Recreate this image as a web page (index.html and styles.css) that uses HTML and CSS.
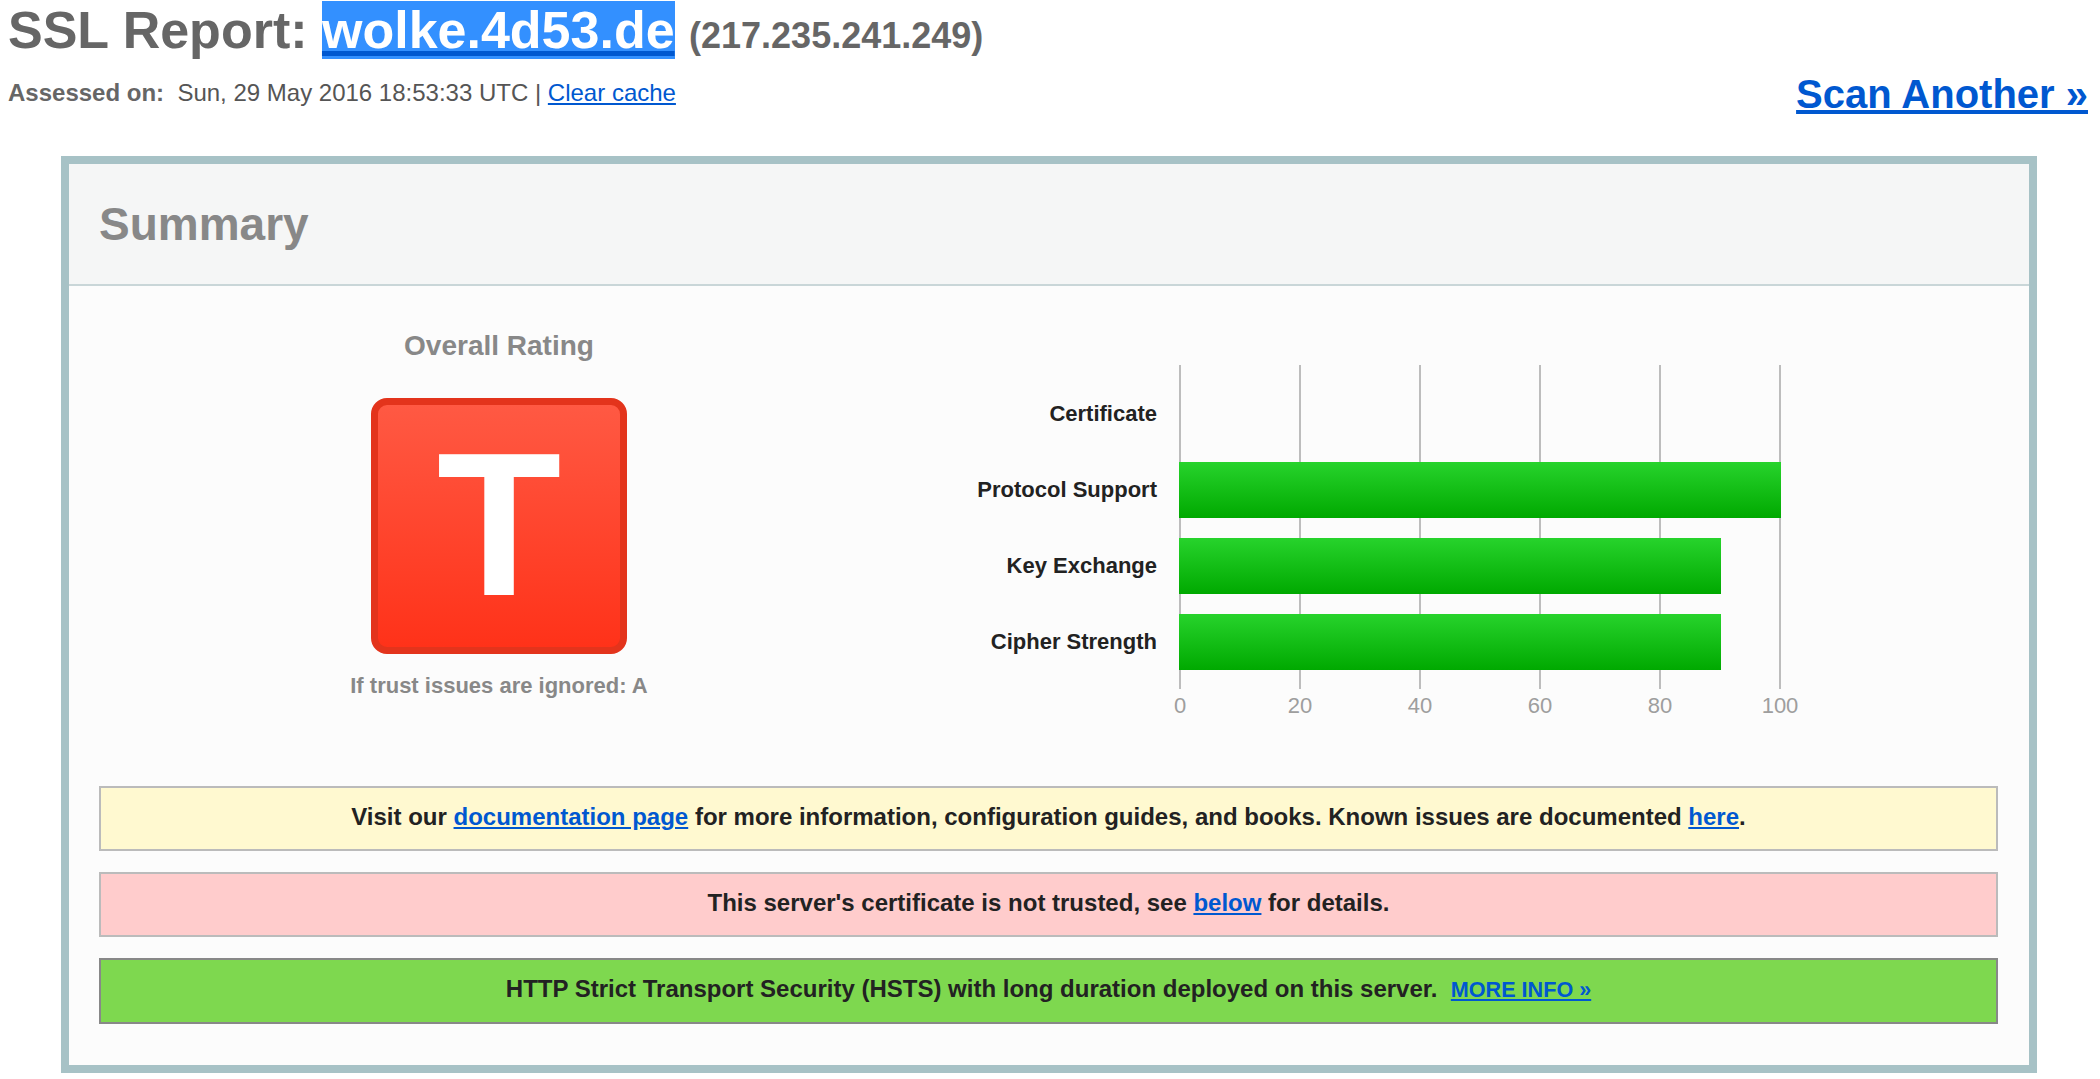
FILE: index.html
```html
<!DOCTYPE html>
<html lang="en">
<head>
<meta charset="utf-8">
<title>SSL Server Test: wolke.4d53.de</title>
<link rel="stylesheet" href="styles.css">
</head>
<body>
<div class="page">
  <h1 class="title">SSL Report: <a class="host" href="#">wolke.4d53.de</a> <span class="ip">(217.235.241.249)</span></h1>
  <div class="meta-row">
    <div class="assessed"><b>Assessed on:</b>&nbsp; Sun, 29 May 2016 18:53:33 UTC | <a href="#">Clear cache</a></div>
    <a class="scan" href="#">Scan Another &raquo;</a>
  </div>

  <div class="report">
    <div class="report-head"><h2>Summary</h2></div>
    <div class="report-body">
      <div class="overview">
        <div class="rating">
          <div class="rating-title">Overall Rating</div>
          <div class="grade">T</div>
          <div class="rating-note">If trust issues are ignored: A</div>
        </div>
        <div class="chart">
          <div class="chart-labels">
            <div class="chart-label">Certificate</div>
            <div class="chart-label">Protocol Support</div>
            <div class="chart-label">Key Exchange</div>
            <div class="chart-label">Cipher Strength</div>
          </div>
          <div class="chart-main">
            <div class="plot">
              <div class="bar-row"><div class="bar" style="width:0%"></div></div>
              <div class="bar-row"><div class="bar" style="width:100%"></div></div>
              <div class="bar-row"><div class="bar" style="width:90%"></div></div>
              <div class="bar-row"><div class="bar" style="width:90%"></div></div>
            </div>
            <div class="axis">
              <span>0</span><span>20</span><span>40</span><span>60</span><span>80</span><span>100</span>
            </div>
          </div>
        </div>
      </div>

      <div class="alerts">
        <div class="alert alert-info">Visit our <a href="#">documentation page</a> for more information, configuration guides, and books. Known issues are documented <a href="#">here</a>.</div>
        <div class="alert alert-error">This server's certificate is not trusted, see <a href="#">below</a> for details.</div>
        <div class="alert alert-good">HTTP Strict Transport Security (HSTS) with long duration deployed on this server.&nbsp; <a class="more" href="#">MORE INFO &raquo;</a></div>
      </div>
    </div>
  </div>
</div>
</body>
</html>
```

FILE: styles.css
```css
html, body {
  margin: 0;
  padding: 0;
  background: #ffffff;
}

body {
  font-family: "Liberation Sans", Arial, Helvetica, sans-serif;
  color: #222;
}

a {
  color: #0058d0;
  text-decoration: underline;
}

.page {
  padding: 0 12px 0 8px;
}

.title {
  margin: 0;
  font-size: 52px;
  line-height: 60px;
  font-weight: bold;
  color: #666;
  white-space: nowrap;
}

.host {
  background: #3390ff;
  color: #ffffff;
  text-decoration-color: #0058d0;
}

.ip {
  font-size: 36px;
}

.meta-row {
  display: flex;
  justify-content: space-between;
  align-items: flex-start;
  margin-top: 5px;
}

.assessed {
  padding-top: 8px;
  font-size: 24px;
  line-height: 28px;
  color: #555;
}

.assessed b {
  color: #666;
}

.scan {
  font-size: 40px;
  line-height: 46px;
  font-weight: bold;
}

.report {
  margin: 39px 51px 0 53px;
  border: 8px solid #a7c2c6;
}

.report-head {
  height: 120px;
  display: flex;
  align-items: center;
  padding-left: 30px;
  background: #f5f6f6;
  border-bottom: 2px solid #c9d6d8;
}

.report-head h2 {
  margin: 0;
  font-size: 46px;
  line-height: 52px;
  font-weight: bold;
  color: #888;
}

.report-body {
  background: #fcfcfc;
  padding: 44px 31px 41px 30px;
}

.overview {
  display: flex;
  align-items: flex-start;
}

.rating {
  width: 800px;
  display: flex;
  flex-direction: column;
  align-items: center;
}

.rating-title {
  font-size: 28px;
  line-height: 32px;
  font-weight: bold;
  color: #888;
}

.grade {
  margin-top: 36px;
  width: 256px;
  height: 256px;
  box-sizing: border-box;
  padding-bottom: 4px;
  border: 7px solid #e3341c;
  border-radius: 16px;
  background: linear-gradient(#ff5943, #ff3219);
  display: flex;
  align-items: center;
  justify-content: center;
  color: #ffffff;
  font-size: 204px;
  line-height: 204px;
  font-weight: bold;
}

.rating-note {
  margin-top: 19px;
  font-size: 22px;
  line-height: 26px;
  font-weight: bold;
  color: #888;
}

.chart {
  display: flex;
  margin-top: 35px;
  gap: 22px;
}

.chart-labels {
  width: 258px;
  padding: 21px 0 19px;
  display: flex;
  flex-direction: column;
  gap: 20px;
}

.chart-label {
  height: 56px;
  display: flex;
  align-items: center;
  justify-content: flex-end;
  font-size: 22px;
  font-weight: bold;
  color: #222;
  white-space: nowrap;
}

.chart-main {
  width: 602px;
}

.plot {
  padding: 21px 0 19px;
  display: flex;
  flex-direction: column;
  gap: 20px;
  background-image: repeating-linear-gradient(to right, #bdbdbd 0, #bdbdbd 2px, transparent 2px, transparent 120px);
}

.bar-row {
  height: 56px;
}

.bar {
  height: 56px;
  background: linear-gradient(#27d32c, #00a900);
}

.axis {
  display: flex;
  margin-left: -59px;
  margin-top: 4px;
}

.axis span {
  width: 120px;
  flex: none;
  text-align: center;
  font-size: 22px;
  line-height: 26px;
  color: #9e9e9e;
}

.alerts {
  margin-top: 67px;
  display: flex;
  flex-direction: column;
  gap: 21px;
}

.alert {
  border: 2px solid #bbbbbb;
  padding: 15px 10px 18px;
  text-align: center;
  font-size: 24px;
  line-height: 28px;
  font-weight: bold;
  color: #222;
}

.alert-info {
  background: #fff9d0;
}

.alert-error {
  background: #ffcccc;
}

.alert-good {
  background: #7ed84f;
  border-color: #888888;
}

.alert .more {
  font-size: 21.6px;
}
```
